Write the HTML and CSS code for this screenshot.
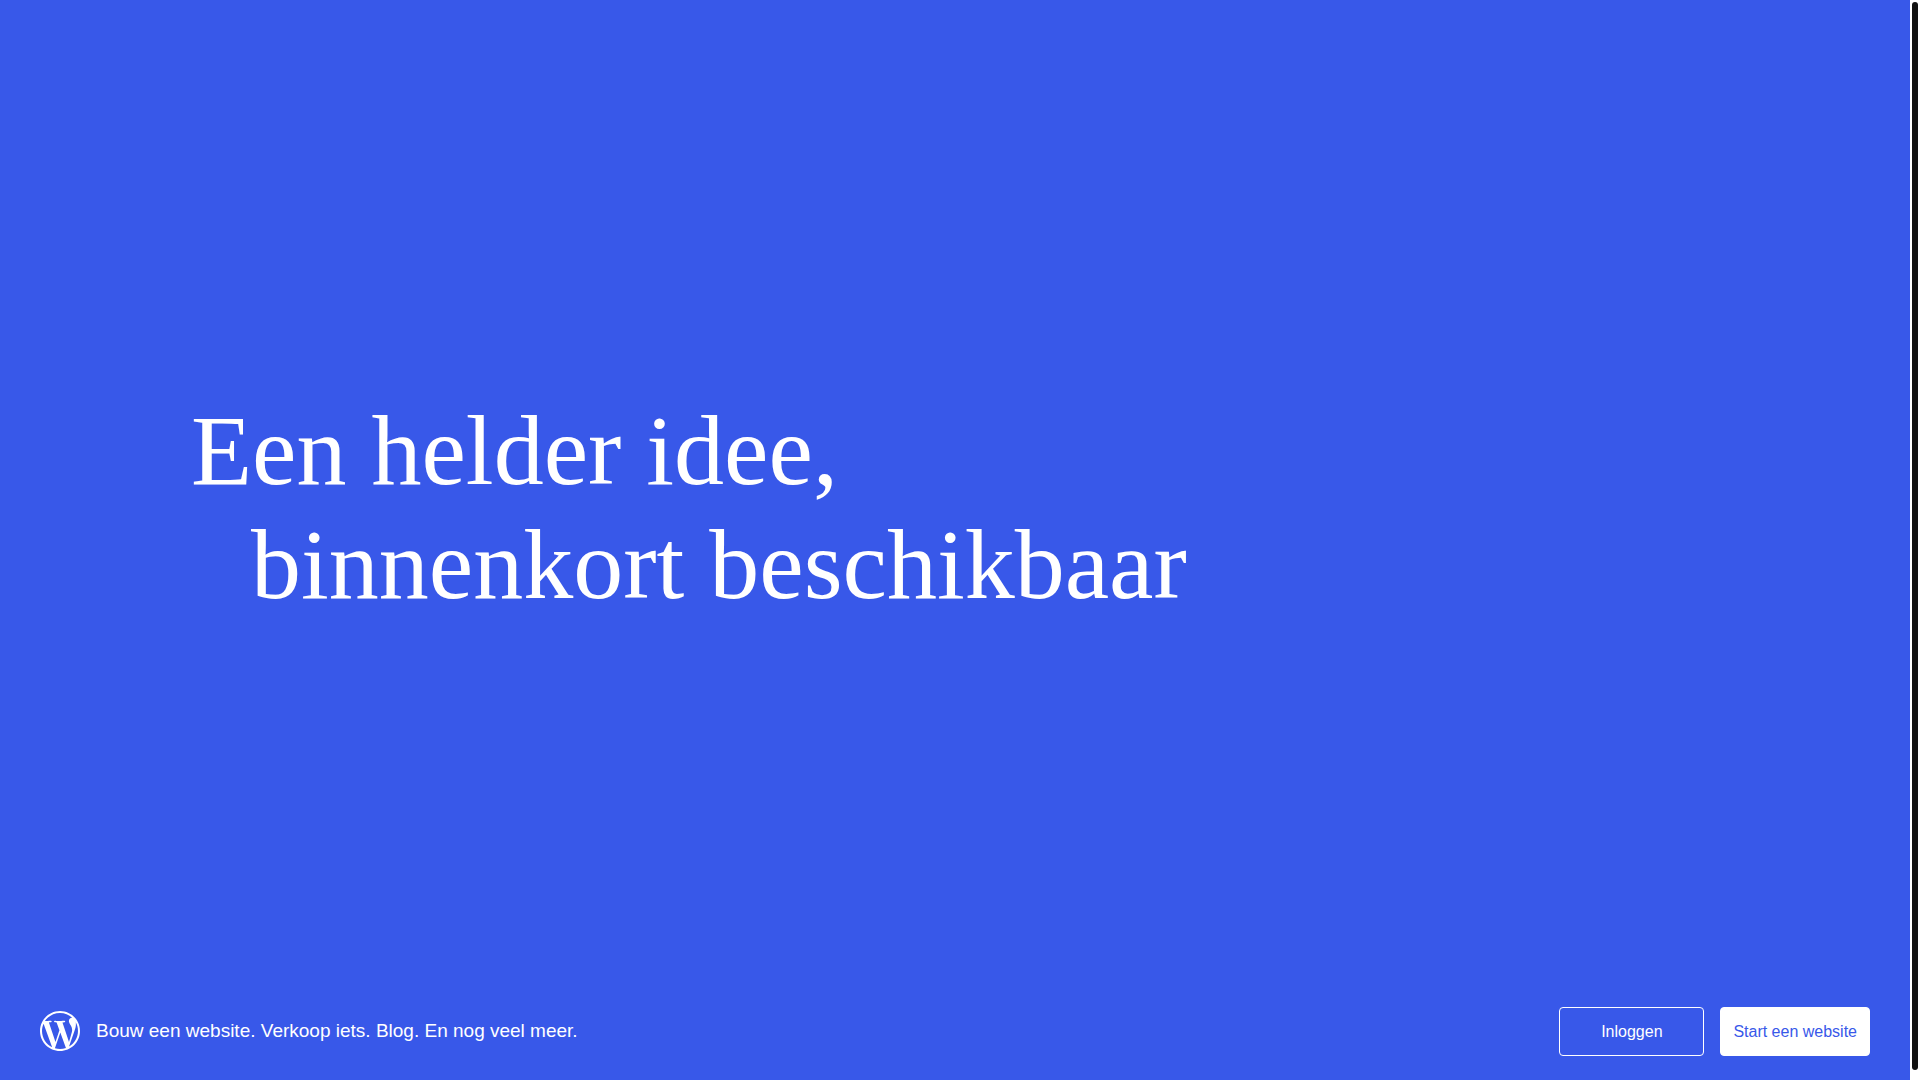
FILE: index.html
```html
<!DOCTYPE html>
<html lang="nl">
<head>
<meta charset="utf-8">
<title>Binnenkort beschikbaar</title>
<link rel="stylesheet" href="styles.css">
</head>
<body>
<div class="page">
<main class="hero">
<h1 class="headline">Een helder idee,<span class="headline-second">binnenkort beschikbaar</span></h1>
</main>
<footer class="bar">
<div class="brand">
<svg class="logo" viewBox="0 0 24 24" aria-hidden="true"><path d="M21.469 6.825c.84 1.537 1.318 3.3 1.318 5.175 0 3.979-2.156 7.456-5.363 9.325l3.295-9.527c.615-1.54.82-2.771.82-3.864 0-.405-.026-.78-.07-1.11m-7.981.105c.647-.03 1.232-.105 1.232-.105.582-.075.514-.93-.067-.899 0 0-1.755.135-2.88.135-1.064 0-2.85-.15-2.85-.15-.585-.03-.661.855-.075.885 0 0 .54.061 1.125.09l1.68 4.605-2.37 7.08L5.354 6.9c.649-.03 1.234-.1 1.234-.1.585-.075.516-.93-.065-.896 0 0-1.746.138-2.874.138-.2 0-.438-.008-.69-.015C4.911 3.15 8.235 1.215 12 1.215c2.809 0 5.365 1.072 7.286 2.833-.046-.003-.091-.009-.141-.009-1.06 0-1.812.923-1.812 1.914 0 .89.513 1.643 1.06 2.531.411.72.89 1.643.89 2.977 0 .915-.354 1.994-.821 3.479l-1.075 3.585-3.9-11.61.001.014zM12 22.784c-1.059 0-2.081-.153-3.048-.437l3.237-9.406 3.315 9.087c.024.053.05.101.078.149-1.12.393-2.325.609-3.582.609M1.211 12c0-1.564.336-3.05.935-4.39L7.29 21.709C3.694 19.96 1.212 16.271 1.211 12M12 0C5.385 0 0 5.385 0 12s5.385 12 12 12 12-5.385 12-12S18.615 0 12 0"/></svg>
<p class="tagline">Bouw een website. Verkoop iets. Blog. En nog veel meer.</p>
</div>
<nav class="actions">
<a class="button button-outline" href="#login">Inloggen</a>
<a class="button button-solid" href="#start">Start een website</a>
</nav>
</footer>
</div>
<div class="track" aria-hidden="true"><div class="thumb"></div></div>
</body>
</html>
```

FILE: styles.css
```css
* { box-sizing: border-box; }
body { margin: 0; display: flex; height: 100vh; overflow: hidden; background: #fff; font-family: "Liberation Sans", Arial, sans-serif; }
.page { flex: 1; display: flex; flex-direction: column; background: #3858e9; color: #fff; }
.hero { flex: 1; display: flex; align-items: center; padding: 32px 10% 0; }
.headline { margin: 0; font: 400 100px/114px "Liberation Serif", "Times New Roman", serif; }
.headline-second { display: block; padding-left: 60px; }
.bar { display: flex; align-items: center; justify-content: space-between; padding: 24px 40px; }
.brand { display: flex; align-items: center; gap: 16px; padding-bottom: 2px; }
.logo { width: 40px; height: 40px; fill: currentColor; }
.tagline { margin: 0; font-size: 19px; line-height: 28px; }
.actions { display: flex; gap: 16px; }
.button { display: flex; align-items: center; justify-content: center; min-width: 145px; height: 49px; padding: 0 12px; border: 1px solid #fff; border-radius: 4px; font-size: 16px; text-decoration: none; white-space: nowrap; }
.button-outline { color: #fff; }
.button-solid { background: #fff; color: #3858e9; }
.track { width: 10px; padding: 2px 2px 10px; }
.thumb { height: 100%; border-radius: 3px; background: #111; }
```
